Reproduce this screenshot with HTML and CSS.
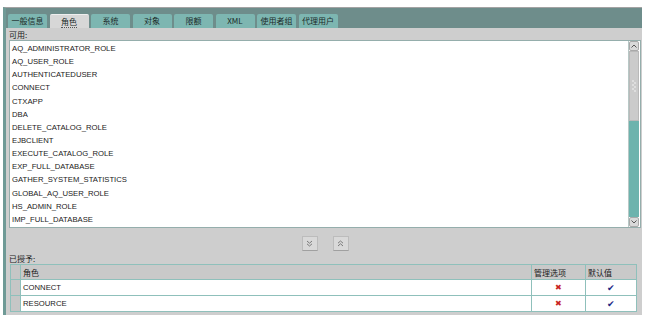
FILE: index.html
```html
<!DOCTYPE html>
<html lang="zh-CN">
<head>
    <meta charset="UTF-8">
    <title>角色</title>
    <link rel="stylesheet" href="styles.css">
</head>
<body>

    <div class="panel">
        <div class="tabbar">
            <div class="tab">一般信息</div>
            <div class="tab active"><span>角色</span></div>
            <div class="tab">系统</div>
            <div class="tab">对象</div>
            <div class="tab">限额</div>
            <div class="tab">XML</div>
            <div class="tab">使用者组</div>
            <div class="tab">代理用户</div>
        </div>

        <div class="content">
            <div class="label">可用:</div>
            <div class="listbox">
                <ul class="items">
                    <li>AQ_ADMINISTRATOR_ROLE</li>
                    <li>AQ_USER_ROLE</li>
                    <li>AUTHENTICATEDUSER</li>
                    <li>CONNECT</li>
                    <li>CTXAPP</li>
                    <li>DBA</li>
                    <li>DELETE_CATALOG_ROLE</li>
                    <li>EJBCLIENT</li>
                    <li>EXECUTE_CATALOG_ROLE</li>
                    <li>EXP_FULL_DATABASE</li>
                    <li>GATHER_SYSTEM_STATISTICS</li>
                    <li>GLOBAL_AQ_USER_ROLE</li>
                    <li>HS_ADMIN_ROLE</li>
                    <li>IMP_FULL_DATABASE</li>
                </ul>
                <div class="scroll">
                    <div class="arrow">
                        <svg width="6" height="4" viewBox="0 0 6 4"><path d="M0.5 3.5 L3 1 L5.5 3.5" fill="none" stroke="#555" stroke-width="1"/></svg>
                    </div>
                    <div class="thumb">
                        <svg width="4" height="12" viewBox="0 0 4 12">
                            <circle cx="1" cy="1" r="0.7" fill="#fff"/><circle cx="3" cy="3" r="0.7" fill="#fff"/>
                            <circle cx="1" cy="5" r="0.7" fill="#fff"/><circle cx="3" cy="7" r="0.7" fill="#fff"/>
                            <circle cx="1" cy="9" r="0.7" fill="#fff"/><circle cx="3" cy="11" r="0.7" fill="#fff"/>
                        </svg>
                    </div>
                    <div class="track"></div>
                    <div class="arrow">
                        <svg width="6" height="4" viewBox="0 0 6 4"><path d="M0.5 0.5 L3 3 L5.5 0.5" fill="none" stroke="#555" stroke-width="1"/></svg>
                    </div>
                </div>
            </div>

            <div class="movers">
                <button class="mover">
                    <svg width="7" height="7" viewBox="0 0 7 7"><path d="M1 1 L3.5 3.2 L6 1 M1 3.8 L3.5 6 L6 3.8" fill="none" stroke="#7a7a7a" stroke-width="1"/></svg>
                </button>
                <button class="mover">
                    <svg width="7" height="7" viewBox="0 0 7 7"><path d="M1 6 L3.5 3.8 L6 6 M1 3.2 L3.5 1 L6 3.2" fill="none" stroke="#7a7a7a" stroke-width="1"/></svg>
                </button>
            </div>

            <div class="label">已授予:</div>
            <table class="granted">
                <tr class="head">
                    <td class="rowhead"></td>
                    <td class="name">角色</td>
                    <td class="opt">管理选项</td>
                    <td class="def">默认值</td>
                </tr>
                <tr>
                    <td class="rowhead"></td>
                    <td class="name">CONNECT</td>
                    <td class="opt mark"><span class="cross">✖</span></td>
                    <td class="def mark"><span class="tick">✔</span></td>
                </tr>
                <tr>
                    <td class="rowhead"></td>
                    <td class="name">RESOURCE</td>
                    <td class="opt mark"><span class="cross">✖</span></td>
                    <td class="def mark"><span class="tick">✔</span></td>
                </tr>
            </table>
        </div>
    </div>

</body>
</html>
```

FILE: styles.css
```css
/* Oracle-console style role editor */
body {
    background-color: #fff;
    color: #1a1a1a;
    font-family: "Liberation Sans", "Noto Sans CJK SC", sans-serif;
    font-size: 7.7px;
    margin: 0;
    padding: 7px 0 0 3px;
}

.panel {
    width: 639px;
    box-sizing: border-box;
    background-color: #cecece;
    border-left: 3px solid #6f9a96;
    border-top: 1px solid #a3a3a3;
}

/* Tabs */
.tabbar {
    height: 20px;
    box-sizing: border-box;
    background-color: #6e8d8b;
    padding: 6px 0 0 2px;
    display: flex;
    gap: 2.5px;
}

.tab {
    width: 39px;
    height: 14px;
    background-color: #7db6b1;
    border-radius: 2px 2px 0 0;
    font-family: "Noto Sans CJK SC", "Liberation Sans", sans-serif;
    font-size: 8px;
    line-height: 14px;
    text-align: center;
    color: #1c2b2a;
}

.tab.active {
    background-color: #d7d7d7;
    border-top: 1px solid #eee;
    height: 13px;
    line-height: 13px;
}

.tab.active span {
    border-bottom: 1px dotted #555;
}

/* Content */
.content {
    padding: 2px 1px 3px 3px;
}

.label {
    font-family: "Noto Sans CJK SC", "Liberation Sans", sans-serif;
    font-size: 8px;
    height: 10px;
    line-height: 10px;
}

.listbox {
    height: 188px;
    box-sizing: border-box;
    background-color: #fff;
    border: 1px solid #95aeac;
    display: flex;
}

.items {
    flex: 1;
    list-style: none;
    margin: 0;
    padding: 1px 0 0 2px;
}

.items li {
    height: 13.15px;
    line-height: 13px;
    white-space: nowrap;
}

.scroll {
    width: 10px;
    margin-right: 1px;
    display: flex;
    flex-direction: column;
    border-left: 1px solid #b8c8c6;
}

.arrow {
    height: 10px;
    background-color: #d9d9d9;
    border: 1px solid #a9a9a9;
    border-radius: 2px;
    box-sizing: border-box;
    display: flex;
    align-items: center;
    justify-content: center;
}

.thumb {
    height: 70px;
    background-color: #cbcbcb;
    border: 1px solid #b9b9b9;
    box-sizing: border-box;
    display: flex;
    align-items: center;
    justify-content: center;
}

.track {
    flex: 1;
    background-color: #6db3ad;
}

/* Move buttons */
.movers {
    height: 26px;
    box-sizing: border-box;
    padding-top: 8px;
    display: flex;
    justify-content: center;
    gap: 15px;
}

.mover {
    width: 16px;
    height: 15px;
    padding: 0;
    background-color: #d9d9d9;
    border: 1px solid #bcbcbc;
    border-bottom-color: #a0a0a0;
    display: flex;
    align-items: center;
    justify-content: center;
}

/* Granted table */
.granted {
    margin-left: 1px;
    width: 627px;
    border-collapse: collapse;
    background-color: #fff;
}

.granted td {
    border: 1px solid #8fc0bb;
    padding: 0 0 0 2px;
    height: 15px;
    white-space: nowrap;
}

.granted .head td {
    background-color: #c9c9c9;
    height: 14px;
    font-family: "Noto Sans CJK SC", "Liberation Sans", sans-serif;
    font-size: 8px;
}

.granted td.rowhead {
    width: 9px;
    padding: 0;
    background-color: #c6c6c6;
}

.granted td.opt {
    width: 51px;
}

.granted td.def {
    width: 48px;
}

.granted td.mark {
    text-align: center;
    padding: 0;
}

.cross {
    color: #c8241e;
    font-size: 8px;
}

.tick {
    color: #1d2a86;
    font-size: 9px;
}
```
